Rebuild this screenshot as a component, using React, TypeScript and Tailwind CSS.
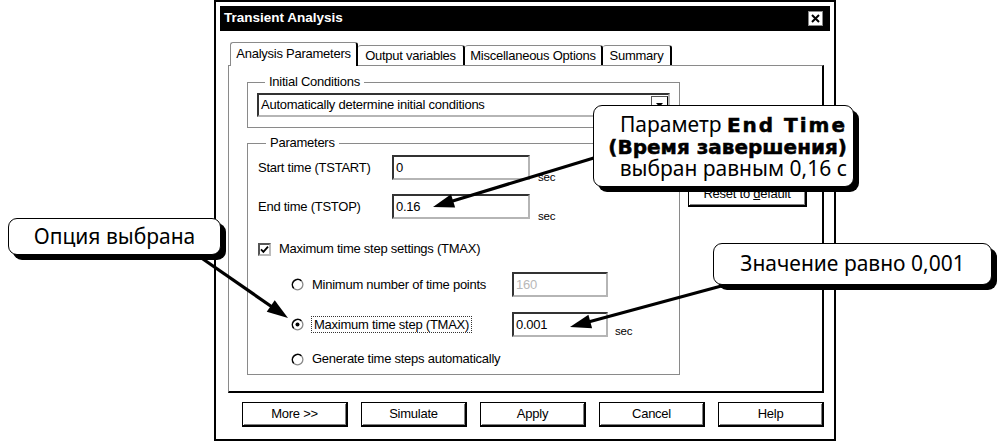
import React from 'react';

const uiFont = "font-['Liberation_Sans',Arial,sans-serif] tracking-[-0.25px]";

function Radio({ checked }: { checked?: boolean }) {
  return (
    <svg width="13" height="13" viewBox="0 0 13 13" className="shrink-0">
      <circle cx="6.5" cy="6.5" r="5.4" fill="#fff" stroke="#8a8a8a" strokeWidth="1.3" />
      <path d="M2.7 10.3 A5.4 5.4 0 0 1 10.3 2.7" fill="none" stroke="#000" strokeWidth="1.4" />
      {checked && <circle cx="6.5" cy="6.5" r="2" fill="#000" />}
    </svg>
  );
}

function Checkbox() {
  return (
    <div className="w-[13px] h-[13px] shrink-0 border-2 border-t-[#555] border-l-[#555] border-r-[#bbb] border-b-[#bbb] bg-white flex items-center justify-center">
      <svg width="9" height="9" viewBox="0 0 9 9">
        <path d="M1 4.3 L3.4 6.8 L8 1.6" fill="none" stroke="#000" strokeWidth="1.8" />
      </svg>
    </div>
  );
}

function Field({ value, disabled, className }: { value: string; disabled?: boolean; className: string }) {
  return (
    <div
      className={`h-[25px] border-2 border-t-[#333] border-l-[#333] border-r-[#b5b5b5] border-b-[#b5b5b5] bg-white flex items-center pl-[2px] ${
        disabled ? 'text-[#b8b8b8]' : 'text-black'
      } ${className}`}
    >
      {value}
    </div>
  );
}

function Button({ children, className = '' }: { children: React.ReactNode; className?: string }) {
  return (
    <div
      className={`h-[25px] border border-black border-r-2 border-b-2 shadow-[inset_1px_1px_0_#fff,inset_-1px_-1px_0_#808080] bg-white flex items-center justify-center ${className}`}
    >
      {children}
    </div>
  );
}

function Arrow({ x1, y1, x2, y2 }: { x1: number; y1: number; x2: number; y2: number }) {
  const dx = x2 - x1;
  const dy = y2 - y1;
  const len = Math.hypot(dx, dy);
  const ux = dx / len;
  const uy = dy / len;
  const L = 21;
  const W = 14;
  const bx = x2 - ux * L;
  const by = y2 - uy * L;
  const pts = `${x2},${y2} ${bx - (uy * W) / 2},${by + (ux * W) / 2} ${bx + (uy * W) / 2},${by - (ux * W) / 2}`;
  return (
    <g>
      <line x1={x1} y1={y1} x2={bx + ux * 3} y2={by + uy * 3} stroke="#000" strokeWidth="3.2" />
      <polygon points={pts} fill="#000" />
    </g>
  );
}

function Callout({ className, children }: { className: string; children: React.ReactNode }) {
  return (
    <div
      className={`absolute bg-white border-[1.5px] border-black rounded-[9px] shadow-[5px_5px_0_#000] font-['Noto_Sans',sans-serif] text-[21px] leading-[21.5px] text-black ${className}`}
    >
      {children}
    </div>
  );
}

const heavy = "font-['DejaVu_Sans',sans-serif] font-bold text-[20px] [-webkit-text-stroke:0.5px_#000]";

export default function App() {
  return (
    <div className="relative w-[1001px] h-[441px] overflow-hidden bg-white">
      <div className="flex pl-[214px]">
        {/* dialog window */}
        <div className={`w-[622px] h-[441px] border-2 border-black bg-white p-[4px] flex flex-col text-[13px] ${uiFont}`}>
          {/* title bar */}
          <div className="h-[25px] bg-black flex items-center justify-between pl-[4px] pr-[7px]">
            <span className="font-bold text-[13.5px] tracking-normal text-white">Transient Analysis</span>
            <div className="w-[15px] h-[15px] bg-white border border-[#888] flex items-center justify-center">
              <svg width="9" height="9" viewBox="0 0 9 9">
                <path d="M1 1 L8 8 M8 1 L1 8" stroke="#000" strokeWidth="2" />
              </svg>
            </div>
          </div>

          {/* tabs */}
          <div className="mt-[11px] ml-[8px] mr-[6px]">
            <div className="flex items-end h-[23px] pl-[2px] whitespace-nowrap">
              <div className="relative z-10 h-[24px] -mb-[1px] w-[128px] bg-white border-l border-t border-[#8a8a8a] border-r-2 border-r-black rounded-t-[3px] flex items-center justify-center pb-[2px]">
                Analysis Parameters
              </div>
              <div className="h-[20px] w-[107px] border-t border-[#8a8a8a] border-r-2 border-r-black rounded-t-[3px] flex items-center justify-center">
                Output variables
              </div>
              <div className="h-[20px] w-[138px] border-t border-[#8a8a8a] border-r-2 border-r-black rounded-t-[3px] flex items-center justify-center">
                Miscellaneous Options
              </div>
              <div className="h-[20px] w-[69px] border-t border-[#8a8a8a] border-r-2 border-r-black rounded-t-[3px] flex items-center justify-center">
                Summary
              </div>
            </div>

            {/* tab panel */}
            <div className="h-[328px] border-l border-t border-[#8a8a8a] border-r-2 border-b-2 border-r-black border-b-black flex gap-[8px] pl-[18px] pt-[9px]">
              <div className="w-[433px] flex flex-col">
                <fieldset className="h-[53px] border border-[#8a8a8a] px-[9px]">
                  <legend className="ml-[8px] px-[4px] leading-[14px]">Initial Conditions</legend>
                  <div className="mt-[4px] h-[24px] border-2 border-t-[#333] border-l-[#333] border-r-[#b5b5b5] border-b-[#b5b5b5] flex items-center justify-between pl-[2px]">
                    <span>Automatically determine initial conditions</span>
                    <div className="w-[17px] h-[18px] border border-[#555] border-r-black border-b-black flex items-center justify-center">
                      <svg width="7" height="4" viewBox="0 0 7 4">
                        <path d="M0 0 H7 L3.5 4 Z" fill="#000" />
                      </svg>
                    </div>
                  </div>
                </fieldset>

                <fieldset className="mt-[8px] h-[239px] border border-[#8a8a8a] px-[10px]">
                  <legend className="ml-[8px] px-[4px] leading-[14px]">Parameters</legend>

                  <div className="mt-[5px] flex items-center">
                    <span className="w-[134px]">Start time (TSTART)</span>
                    <Field value="0" className="w-[138px]" />
                    <span className="self-end ml-[8px] -mb-[6px] text-[11.5px]">sec</span>
                  </div>
                  <div className="mt-[14px] flex items-center">
                    <span className="w-[134px]">End time (TSTOP)</span>
                    <Field value="0.16" className="w-[138px]" />
                    <span className="self-end ml-[8px] -mb-[6px] text-[11.5px]">sec</span>
                  </div>

                  <div className="mt-[23px] h-[14px] flex items-center gap-[8px]">
                    <Checkbox />
                    <span>Maximum time step settings (TMAX)</span>
                  </div>

                  <div className="mt-[16px] flex items-center pl-[33px]">
                    <Radio />
                    <span className="ml-[8px] w-[200px]">Minimum number of time points</span>
                    <Field value="160" disabled className="w-[96px]" />
                  </div>
                  <div className="mt-[15px] flex items-center pl-[33px]">
                    <Radio checked />
                    <span className="ml-[7px] w-[201px]">
                      <span className="border border-dotted border-[#333] px-[2px]">Maximum time step (TMAX)</span>
                    </span>
                    <Field value="0.001" className="w-[96px]" />
                    <span className="self-end ml-[7px] -mb-[3px] text-[11.5px]">sec</span>
                  </div>
                  <div className="mt-[15px] h-[14px] flex items-center pl-[33px]">
                    <Radio />
                    <span className="ml-[8px]">Generate time steps automatically</span>
                  </div>
                </fieldset>
              </div>

              <div className="pt-[107px]">
                <Button className="w-[119px]">
                  <span>
                    Reset to <span className="underline">d</span>efault
                  </span>
                </Button>
              </div>
            </div>
          </div>

          {/* bottom buttons */}
          <div className="mt-[9px] pl-[22px] flex gap-[13px]">
            <Button className="w-[106px]">More &gt;&gt;</Button>
            <Button className="w-[106px]">Simulate</Button>
            <Button className="w-[106px]">Apply</Button>
            <Button className="w-[106px]">Cancel</Button>
            <Button className="w-[106px]">Help</Button>
          </div>
        </div>
      </div>

      {/* annotation arrows */}
      <svg className="absolute inset-0 pointer-events-none" width="1001" height="441">
        <Arrow x1={597} y1={157} x2={433} y2={207} />
        <Arrow x1={200} y1={257} x2={288} y2={318} />
        <Arrow x1={725} y1={285} x2={570} y2={327} />
      </svg>

      {/* callouts */}
      <Callout className="left-[593px] top-[105px] w-[261px] h-[82px] pr-[6px] pt-[8px] text-right">
        <div className="whitespace-nowrap">
          Параметр <span className={`${heavy} tracking-[2px]`}>End Time</span>
        </div>
        <div className={`${heavy} whitespace-nowrap`}>(Время завершения)</div>
        <div className="whitespace-nowrap">выбран равным 0,16 с</div>
      </Callout>
      <Callout className="left-[8px] top-[218px] w-[213px] h-[37px] flex items-center justify-center">
        Опция выбрана
      </Callout>
      <Callout className="left-[713px] top-[243px] w-[279px] h-[42px] flex items-center justify-center">
        Значение равно 0,001
      </Callout>
    </div>
  );
}
